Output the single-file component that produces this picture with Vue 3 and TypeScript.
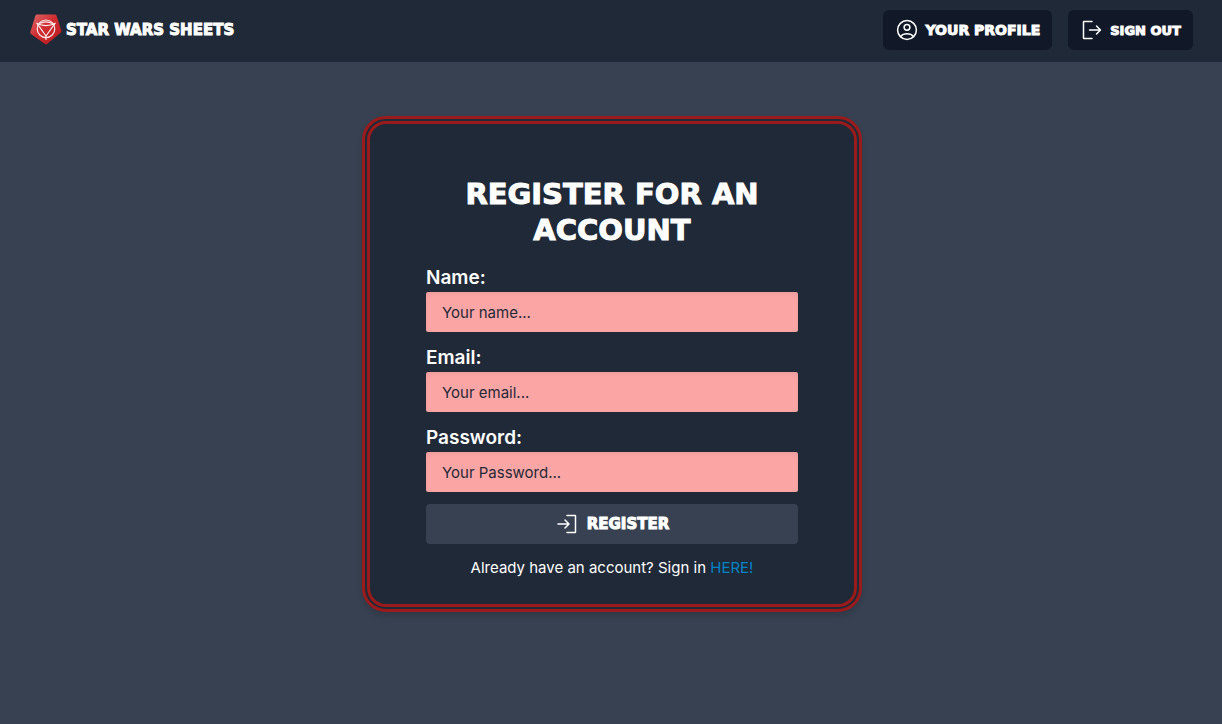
<script setup lang="ts">
import { reactive } from 'vue'

type FieldKey = 'name' | 'email' | 'password'

interface Field {
  key: FieldKey
  label: string
  type: string
  placeholder: string
}

const fields: Field[] = [
  { key: 'name', label: 'Name:', type: 'text', placeholder: 'Your name...' },
  { key: 'email', label: 'Email:', type: 'email', placeholder: 'Your email...' },
  { key: 'password', label: 'Password:', type: 'password', placeholder: 'Your Password...' },
]

const form = reactive<Record<FieldKey, string>>({ name: '', email: '', password: '' })
</script>

<template>
  <div class="page">
    <header class="navbar">
      <a href="#" class="brand display">
        <svg class="logo" viewBox="0 0 32 32" aria-hidden="true">
          <defs>
            <linearGradient id="gem" x1="0" y1="0" x2="1" y2="1">
              <stop offset="0" stop-color="#e06a6c" />
              <stop offset="0.45" stop-color="#cf2d31" />
              <stop offset="1" stop-color="#b3161b" />
            </linearGradient>
          </defs>
          <path d="M7 0.5 25 0.5Q26 0.5 26.5 1.5L31.3 16.5Q31.6 18 30.5 19L17 30Q16 30.8 15 30L1 20Q0 19 0.3 18L5.4 1.5Q6 .5 7 .5Z" fill="url(#gem)" />
          <g fill="none" stroke="#fbeaea" stroke-width="1.2" stroke-linejoin="round">
            <circle cx="16" cy="14.8" r="8.8" />
            <path d="M6.8 9.2Q11 11.6 16 11.6T25.2 9.2L16 22Z" />
            <path d="M9.5 9.5Q16 6.2 22.5 9.5M16 22V26" />
          </g>
        </svg>
        <span>Star Wars Sheets</span>
      </a>
      <nav class="actions">
        <button type="button" class="nav-button profile display">
          <svg class="icon" viewBox="0 0 24 24" aria-hidden="true">
            <circle cx="12" cy="12" r="9.4" />
            <circle cx="12" cy="9.3" r="2.9" />
            <path d="M5.5 18.5C7 16.7 9.3 15.8 12 15.8S17 16.7 18.5 18.5" />
          </svg>
          <span>Your Profile</span>
        </button>
        <button type="button" class="nav-button sign-out display">
          <svg class="icon" viewBox="0 0 24 24" aria-hidden="true">
            <path d="M12 3.5H4Q3.5 3.5 3.5 4V20Q3.5 20.5 4 20.5H12M9.5 12H20.5M16.5 8 20.5 12 16.5 16" />
          </svg>
          <span>Sign out</span>
        </button>
      </nav>
    </header>

    <main class="content">
      <form class="card" @submit.prevent>
        <h1 class="title display">Register for an account</h1>
        <div v-for="field in fields" :key="field.key" class="field">
          <label :for="field.key">{{ field.label }}</label>
          <input :id="field.key" v-model="form[field.key]" :type="field.type" :placeholder="field.placeholder" />
        </div>
        <button type="submit" class="submit display">
          <svg class="icon" viewBox="0 0 24 24" aria-hidden="true">
            <path d="M12 3.5H20Q20.5 3.5 20.5 4V20Q20.5 20.5 20 20.5H12M3 12H14M10 8 14 12 10 16" />
          </svg>
          <span>Register</span>
        </button>
        <p class="hint">Already have an account? Sign in <a href="#">HERE!</a></p>
      </form>
    </main>
  </div>
</template>

<style>
body {
  margin: 0;
  background: #374151;
}
</style>

<style scoped>
* {
  box-sizing: border-box;
}

.page {
  min-height: 100vh;
  background: #374151;
  color: #fff;
  font-family: Inter, "Liberation Sans", sans-serif;
  font-size: 15px;
  line-height: 24px;
}

.display {
  font-family: "DejaVu Sans", sans-serif;
  font-weight: 700;
  text-transform: uppercase;
  -webkit-text-stroke: 1px #fff;
}

.navbar {
  display: flex;
  align-items: center;
  justify-content: space-between;
  padding: 10px 29px 12px 30px;
  background: #1f2937;
}

.brand {
  display: flex;
  align-items: center;
  gap: 4px;
  color: #fff;
  font-size: 15px;
  text-decoration: none;
}

.logo {
  width: 32px;
  height: 32px;
}

.actions {
  display: flex;
  gap: 16px;
}

button {
  display: flex;
  align-items: center;
  height: 40px;
  border: 0;
  border-radius: 4px;
  color: #fff;
  cursor: pointer;
}

.nav-button {
  gap: 6px;
  padding: 0 12px;
  border-radius: 6px;
  background: #111827;
}

.profile {
  font-size: 14px;
}

.sign-out {
  font-size: 13px;
}

.icon {
  width: 24px;
  height: 24px;
  fill: none;
  stroke: currentColor;
  stroke-width: 1.5;
  stroke-linecap: round;
  stroke-linejoin: round;
}

.content {
  display: flex;
  justify-content: center;
  padding: 54px 16px 54px 18px;
}

.card {
  display: flex;
  flex-direction: column;
  gap: 12px;
  width: 100%;
  max-width: 500px;
  padding: 52px 56px 24px;
  border: 8px double #991b1b;
  border-radius: 24px;
  background: #1f2937;
  box-shadow: 0 4px 6px rgba(0, 0, 0, 0.12);
}

.title {
  margin: 0 0 4px;
  font-size: 29px;
  line-height: 36px;
  text-align: center;
}

.field {
  display: flex;
  flex-direction: column;
}

label {
  font-size: 19px;
  font-weight: 600;
  line-height: 28px;
}

input {
  width: 100%;
  height: 40px;
  padding: 0 16px;
  border: 0;
  border-radius: 2px;
  background: #fca5a5;
  box-shadow: inset 0 2px 4px rgba(0, 0, 0, 0.06);
  color: #1f2937;
  font: inherit;
}

input::placeholder {
  color: #1f2937;
  opacity: 1;
}

.submit {
  justify-content: center;
  gap: 8px;
  background: #374151;
  font-size: 15px;
}

.hint {
  margin: 0;
  text-align: center;
}

.hint a {
  color: #0284c7;
  text-decoration: none;
}
</style>
